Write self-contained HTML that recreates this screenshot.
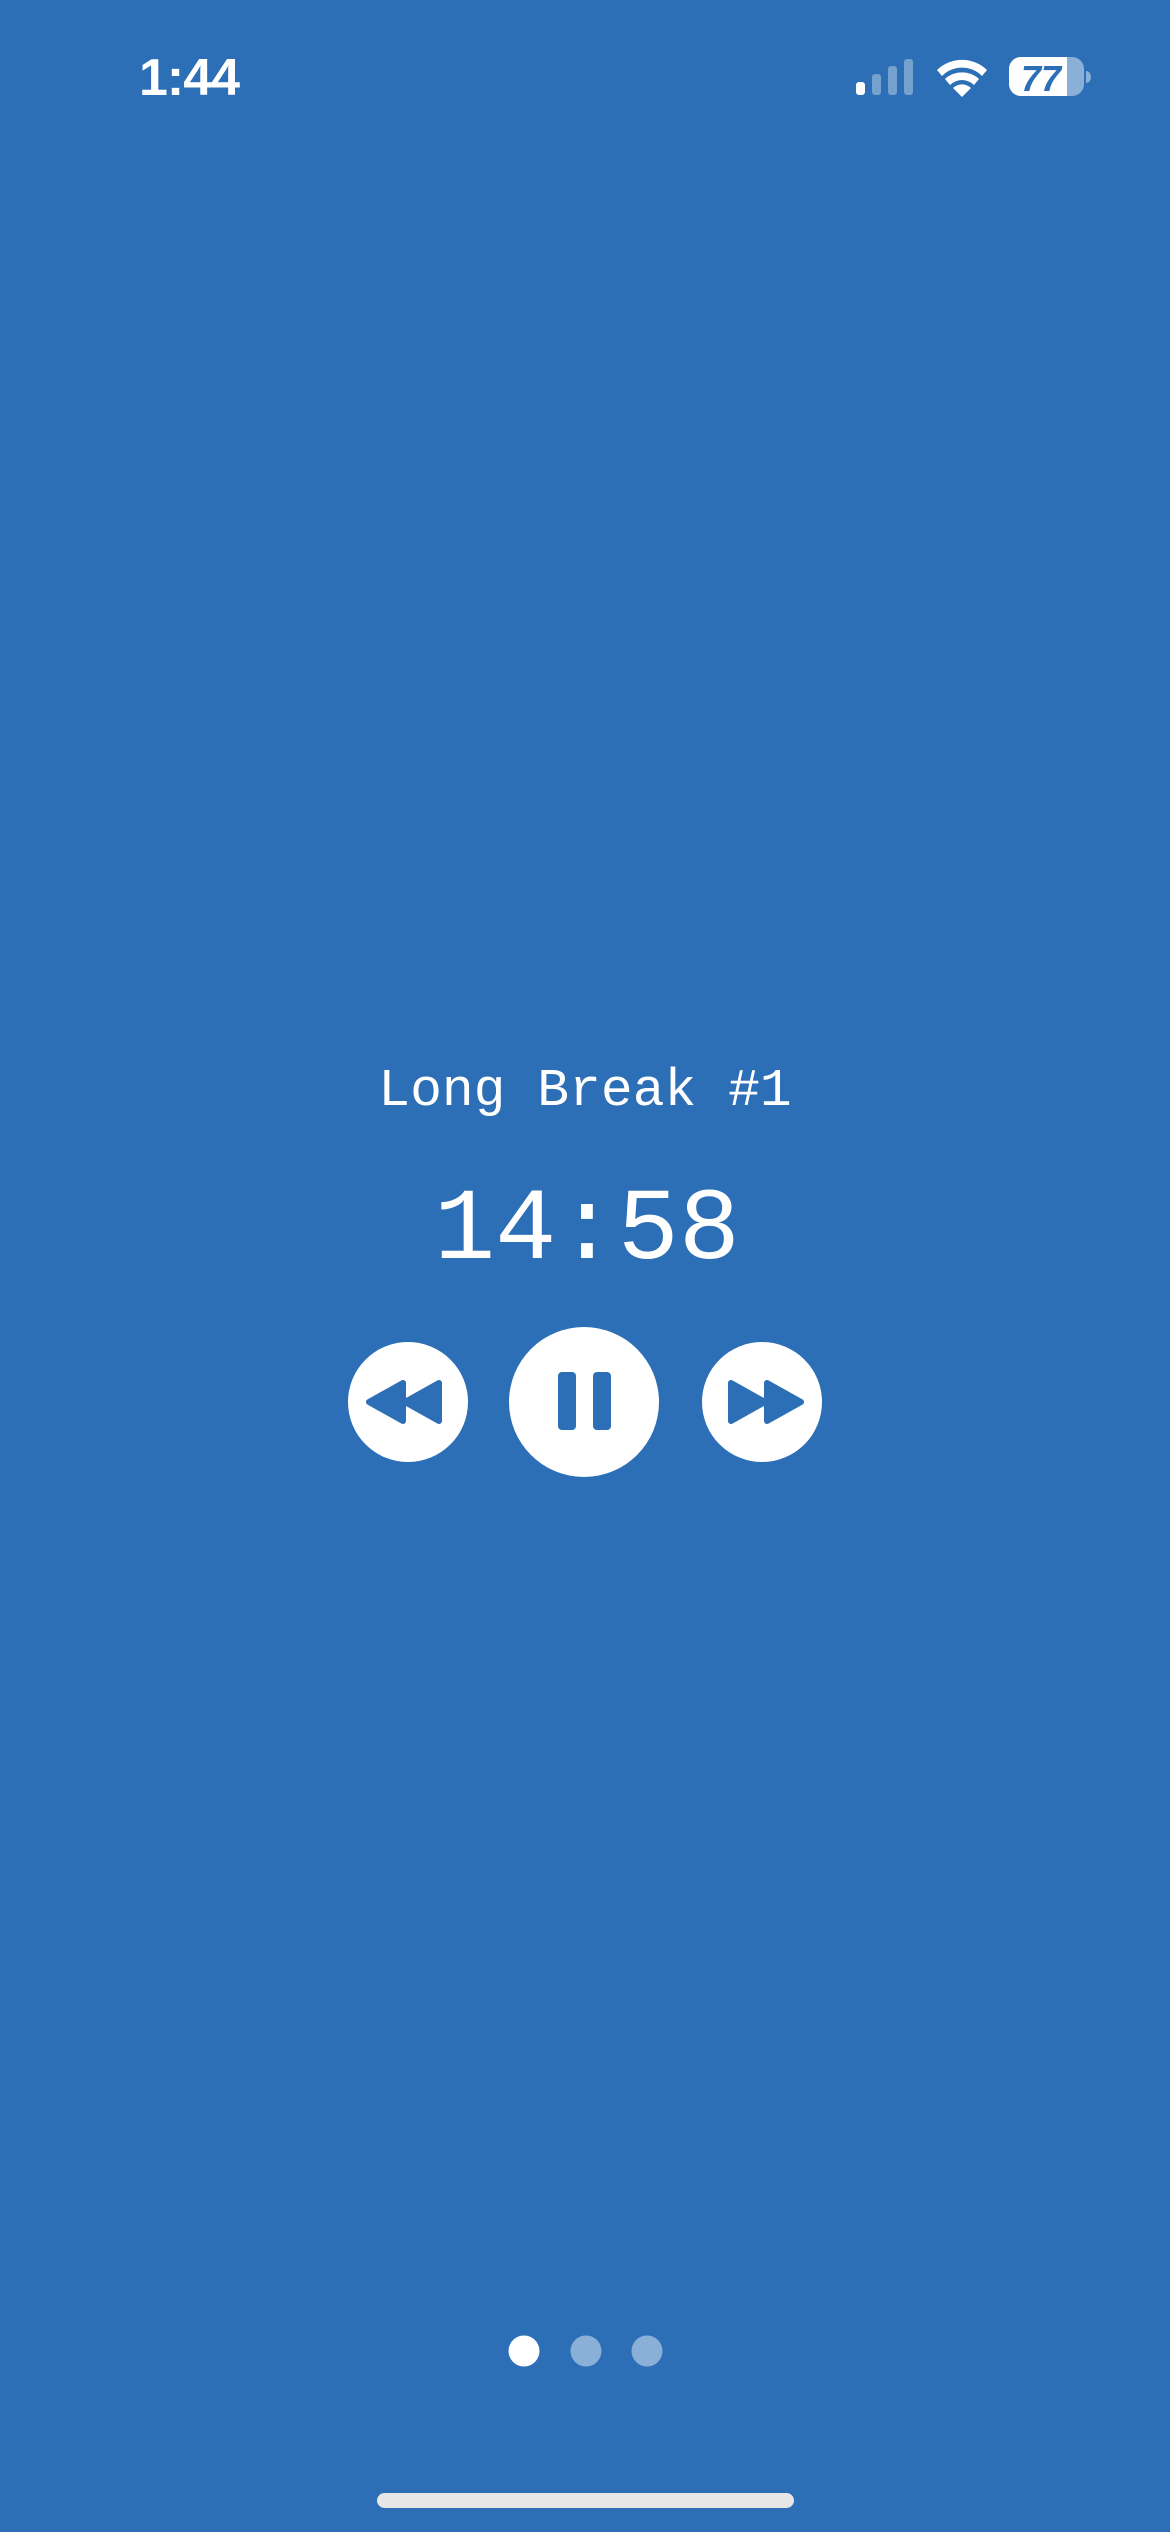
<!DOCTYPE html>
<html><head><meta charset="utf-8"><style>
html,body{margin:0;padding:0}
body{width:1170px;height:2532px;background:#2c6fb6;position:relative;overflow:hidden;font-family:"Liberation Sans",sans-serif}
.abs{position:absolute}
.mono{font-family:"Liberation Mono",monospace;color:#fff;white-space:nowrap}
</style></head><body>
<div class="abs" style="left:139px;top:48px;font-size:52px;font-weight:bold;color:#fff;letter-spacing:-1px">1:44</div>
<svg class="abs" style="left:0;top:0" width="1170" height="120">
<rect x="856" y="82" width="9" height="13" rx="3" fill="#fff"/>
<rect x="872" y="74" width="9" height="21" rx="3" fill="#fff" fill-opacity=".35"/>
<rect x="888" y="66" width="9" height="29" rx="3" fill="#fff" fill-opacity=".35"/>
<rect x="904" y="59" width="9" height="36" rx="3" fill="#fff" fill-opacity=".35"/>
<path d="M937 70 A36 36 0 0 1 987 70 L982 76 A28 28 0 0 0 942 76 Z" fill="#fff"/>
<path d="M945 79 A25 25 0 0 1 979 79 L974 85 A17 17 0 0 0 950 85 Z" fill="#fff"/>
<path d="M953 88 A13 13 0 0 1 971 88 L962 97 Z" fill="#fff"/>
<defs><clipPath id="bc"><rect x="1009" y="57" width="75" height="39" rx="12"/></clipPath></defs>
<g clip-path="url(#bc)"><rect x="1009" y="57" width="75" height="39" fill="#fff" fill-opacity=".45"/><rect x="1009" y="57" width="58" height="39" fill="#fff"/></g>
<path d="M1086 71 a5 6 0 0 1 0 12 Z" fill="#fff" fill-opacity=".45"/>
<text x="1041" y="91" text-anchor="middle" font-family="Liberation Sans" font-weight="bold" font-style="italic" font-size="36" fill="#2c6fb6">77</text>
</svg>
<div class="abs mono" style="left:0;width:1170px;text-align:center;top:1056px;font-size:53px;line-height:70px">Long Break #1</div>
<div class="abs mono" style="left:0;width:1170px;text-align:center;top:1176px;font-size:102px;line-height:110px;padding-left:2px">14:58</div>
<svg class="abs" style="left:0;top:1300px" width="1170" height="200">
<circle cx="408" cy="102" r="60" fill="#fff"/>
<circle cx="584" cy="102" r="75" fill="#fff"/>
<circle cx="762" cy="102" r="60" fill="#fff"/>
<g fill="#2c6fb6" stroke="#2c6fb6" stroke-width="6" stroke-linejoin="round">
<path d="M369 102 L403 83 L403 121 Z"/><path d="M405 102 L439 83 L439 121 Z"/>
<path d="M801 102 L767 83 L767 121 Z"/><path d="M765 102 L731 83 L731 121 Z"/>
</g>
<rect x="558" y="72" width="18" height="58" rx="4" fill="#2c6fb6"/>
<rect x="593" y="72" width="18" height="58" rx="4" fill="#2c6fb6"/>
</svg>
<svg class="abs" style="left:0;top:2300px" width="1170" height="232">
<circle cx="524" cy="51" r="15.5" fill="#fff"/>
<circle cx="586" cy="51" r="15.5" fill="#fff" fill-opacity=".45"/>
<circle cx="647" cy="51" r="15.5" fill="#fff" fill-opacity=".45"/>
<rect x="377" y="193" width="417" height="15" rx="7.5" fill="#e6e6e6"/>
</svg>
</body></html>
